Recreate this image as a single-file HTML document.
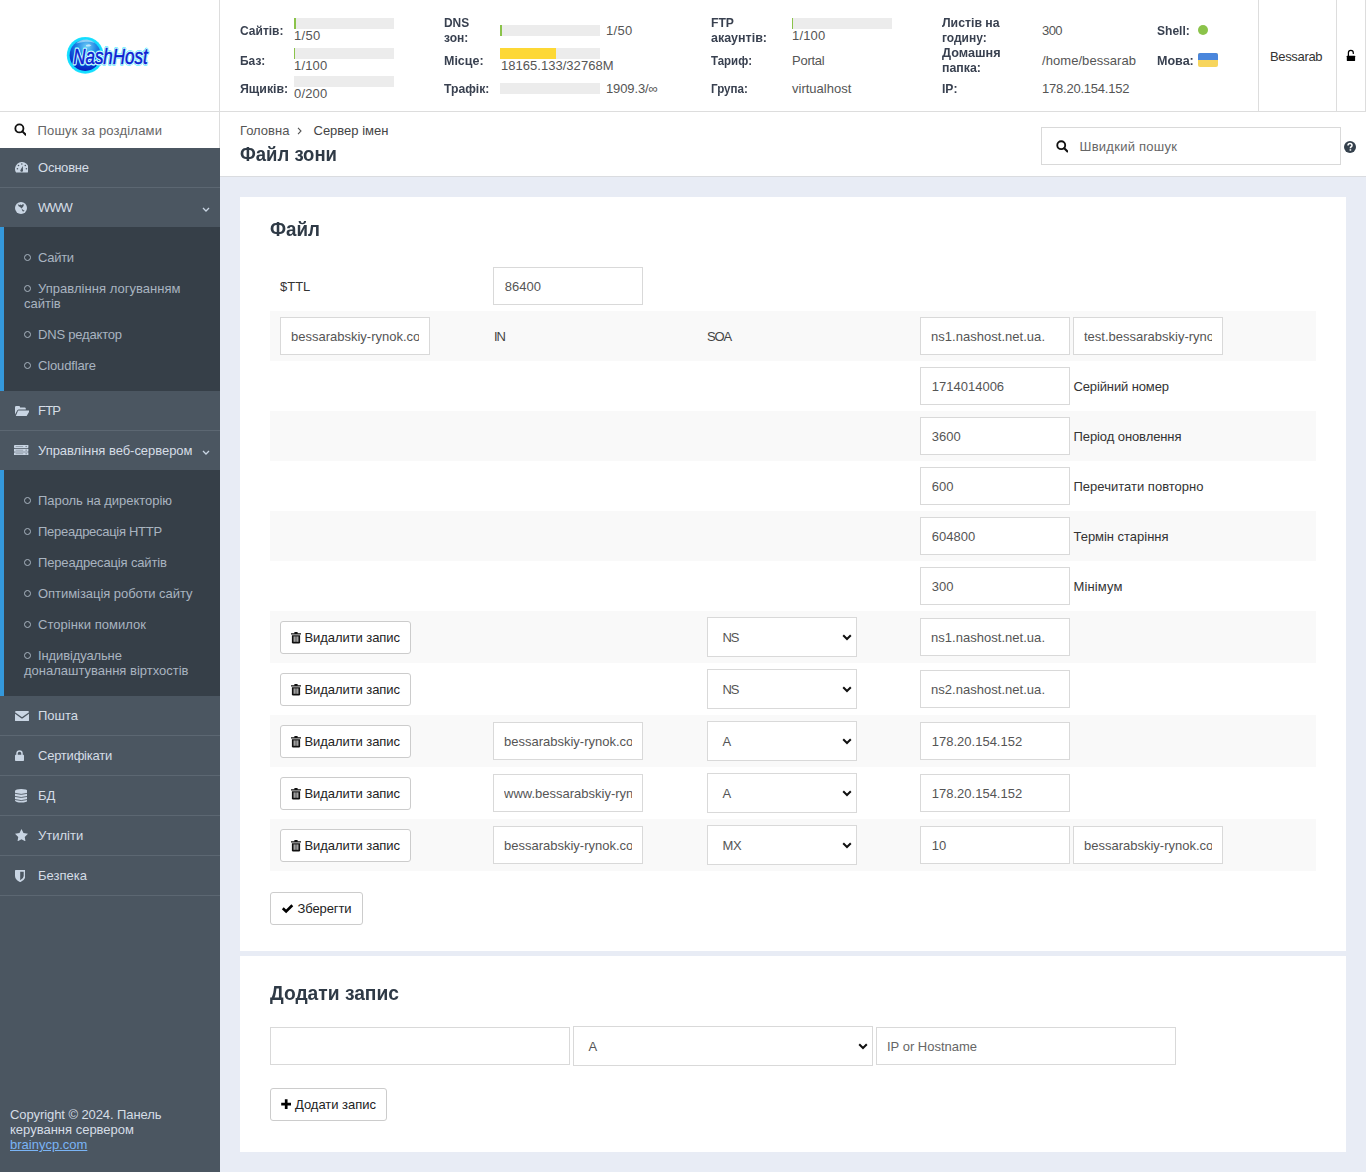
<!DOCTYPE html>
<html lang="uk"><head><meta charset="utf-8"><title>Файл зони</title>
<style>
html,body{margin:0;padding:0}
body{width:1366px;height:1172px;position:relative;overflow:hidden;background:#e8ecf5;font-family:"Liberation Sans",sans-serif;font-size:13px;color:#333}
.r{position:absolute;display:block;box-sizing:border-box}
.t{position:absolute;display:block;white-space:nowrap;line-height:1;margin:0;padding:0}
.in{position:absolute;box-sizing:border-box;background:#fff;border:1px solid #d9d9d9;height:38px}
.btn{position:absolute;box-sizing:border-box;background:#fff;border:1px solid #ccc;border-radius:3px;height:33px}
</style></head><body>
<div class="r" style="left:0px;top:0px;width:1366px;height:111px;background:#fff;"></div>
<div class="r" style="left:0px;top:111px;width:1366px;height:1px;background:#dddddd;"></div>
<div class="r" style="left:0px;top:112px;width:219px;height:36px;background:#fff;"></div>
<div class="r" style="left:220px;top:112px;width:1146px;height:64px;background:#fff;"></div>
<div class="r" style="left:220px;top:176px;width:1146px;height:1px;background:#dadce0;"></div>
<div class="r" style="left:219px;top:0px;width:1px;height:148px;background:#dddddd;"></div>
<div class="r" style="left:1258px;top:0px;width:1px;height:111px;background:#dddddd;"></div>
<div class="r" style="left:1336px;top:0px;width:1px;height:111px;background:#dddddd;"></div>
<div class="r" style="left:1365px;top:0px;width:1px;height:111px;background:#dddddd;"></div>
<div class="r" style="left:0px;top:148px;width:220px;height:1024px;background:#4b5661;"></div>
<div class="r" style="left:240px;top:197px;width:1106px;height:754px;background:#fff;"></div>
<div class="r" style="left:240px;top:956px;width:1106px;height:196px;background:#fff;"></div>
<svg class="r" style="left:55px;top:25px" width="110" height="60" viewBox="55 25 110 60">
<defs>
<radialGradient id="gl" cx="0.55" cy="0.22" r="0.85"><stop offset="0" stop-color="#6fcdf6"/><stop offset="0.35" stop-color="#2389e6"/><stop offset="0.7" stop-color="#0b3fd2"/><stop offset="1" stop-color="#0514b4"/></radialGradient>
<filter id="glow" x="-20%" y="-40%" width="140%" height="180%"><feGaussianBlur stdDeviation="0.9"/></filter>
<filter id="glow2" x="-20%" y="-20%" width="140%" height="140%"><feGaussianBlur stdDeviation="0.6"/></filter>
</defs>
<circle cx="85.2" cy="55.3" r="18.4" fill="#22e4ff" filter="url(#glow2)"/>
<circle cx="85.2" cy="55.3" r="17.6" fill="#14dcff"/>
<circle cx="85.2" cy="55.3" r="15.6" fill="url(#gl)"/>
<path d="M76 43.5 q5 -4.5 11 -4 q5 0.5 8 3.5 q-5 -1.6 -9.5 -1.2 q-5 0.4 -9.5 1.7z" fill="#d8f6ff" opacity="0.55"/>
<path d="M86 45 l3 -0.8 l2.5 1 l-2 1.2 l-3.2 0.2z" fill="#e8fbff" opacity="0.7"/>
<g font-family="Liberation Sans, sans-serif" font-style="italic" font-size="22.5">
<text x="73.2" y="63.7" textLength="74.5" lengthAdjust="spacingAndGlyphs" fill="none" stroke="#3fe9ff" stroke-width="3.4" stroke-linejoin="round" filter="url(#glow2)">NashHost</text>
<text x="73.2" y="63.7" textLength="74.5" lengthAdjust="spacingAndGlyphs" fill="none" stroke="#d4fbff" stroke-width="2.7" stroke-linejoin="round">NashHost</text>
<text x="73.2" y="63.7" textLength="74.5" lengthAdjust="spacingAndGlyphs" fill="#0a22d2" stroke="#0a22d2" stroke-width="0.55">NashHost</text>
</g>
</svg>
<span id="t0" class="t " style="left:240px;top:24px;font-size:13px;color:#394150;font-weight:bold;transform:scaleX(0.9240);transform-origin:0 0;">Сайтів:</span>
<div class="r" style="left:294px;top:18px;width:100px;height:11px;background:#ececec;"></div>
<div class="r" style="left:294px;top:18px;width:2px;height:11px;background:#8bc34a;"></div>
<span id="t1" class="t " style="left:294px;top:29px;font-size:13px;color:#555555;letter-spacing:0.296px;">1/50</span>
<span id="t2" class="t " style="left:240px;top:54px;font-size:13px;color:#394150;font-weight:bold;transform:scaleX(0.9190);transform-origin:0 0;">Баз:</span>
<div class="r" style="left:294px;top:48px;width:100px;height:11px;background:#ececec;"></div>
<div class="r" style="left:294px;top:48px;width:1px;height:11px;background:#8bc34a;"></div>
<span id="t3" class="t " style="left:294px;top:59px;font-size:13px;color:#555555;letter-spacing:0.163px;">1/100</span>
<span id="t4" class="t " style="left:240px;top:82px;font-size:13px;color:#394150;font-weight:bold;transform:scaleX(0.9498);transform-origin:0 0;">Ящиків:</span>
<div class="r" style="left:294px;top:76px;width:100px;height:11px;background:#ececec;"></div>
<span id="t5" class="t " style="left:294px;top:87px;font-size:13px;color:#555555;letter-spacing:0.163px;">0/200</span>
<span id="t6" class="t " style="left:444px;top:16px;font-size:13px;color:#394150;font-weight:bold;transform:scaleX(0.9179);transform-origin:0 0;">DNS</span>
<span id="t7" class="t " style="left:444px;top:31px;font-size:13px;color:#394150;font-weight:bold;transform:scaleX(0.9252);transform-origin:0 0;">зон:</span>
<div class="r" style="left:500px;top:25px;width:100px;height:11px;background:#ececec;"></div>
<div class="r" style="left:500px;top:25px;width:2px;height:11px;background:#8bc34a;"></div>
<span id="t8" class="t " style="left:606px;top:24px;font-size:13px;color:#555555;letter-spacing:0.296px;">1/50</span>
<span id="t9" class="t " style="left:444px;top:54px;font-size:13px;color:#394150;font-weight:bold;transform:scaleX(0.9604);transform-origin:0 0;">Місце:</span>
<div class="r" style="left:500px;top:48px;width:100px;height:11px;background:#ececec;"></div>
<div class="r" style="left:500px;top:48px;width:56px;height:11px;background:#fdd835;"></div>
<span id="t10" class="t " style="left:501px;top:59px;font-size:13px;color:#555555;letter-spacing:0.030px;">18165.133/32768M</span>
<span id="t11" class="t " style="left:444px;top:82px;font-size:13px;color:#394150;font-weight:bold;transform:scaleX(0.9370);transform-origin:0 0;">Трафік:</span>
<div class="r" style="left:500px;top:83px;width:100px;height:11px;background:#ececec;"></div>
<span id="t12" class="t " style="left:606px;top:82px;font-size:13px;color:#555555;letter-spacing:-0.122px;">1909.3/∞</span>
<span id="t13" class="t " style="left:711px;top:16px;font-size:13px;color:#394150;font-weight:bold;transform:scaleX(0.9323);transform-origin:0 0;">FTP</span>
<span id="t14" class="t " style="left:711px;top:31px;font-size:13px;color:#394150;font-weight:bold;transform:scaleX(0.9596);transform-origin:0 0;">акаунтів:</span>
<div class="r" style="left:792px;top:18px;width:100px;height:11px;background:#ececec;"></div>
<div class="r" style="left:792px;top:18px;width:1px;height:11px;background:#8bc34a;"></div>
<span id="t15" class="t " style="left:792px;top:29px;font-size:13px;color:#555555;letter-spacing:0.163px;">1/100</span>
<span id="t16" class="t " style="left:711px;top:54px;font-size:13px;color:#394150;font-weight:bold;transform:scaleX(0.8820);transform-origin:0 0;">Тариф:</span>
<span id="t17" class="t " style="left:792px;top:54px;font-size:13px;color:#555555;letter-spacing:-0.254px;">Portal</span>
<span id="t18" class="t " style="left:711px;top:82px;font-size:13px;color:#394150;font-weight:bold;transform:scaleX(0.8935);transform-origin:0 0;">Група:</span>
<span id="t19" class="t " style="left:792px;top:82px;font-size:13px;color:#555555;">virtualhost</span>
<span id="t20" class="t " style="left:942px;top:16px;font-size:13px;color:#394150;font-weight:bold;transform:scaleX(0.9440);transform-origin:0 0;">Листів на</span>
<span id="t21" class="t " style="left:942px;top:31px;font-size:13px;color:#394150;font-weight:bold;transform:scaleX(0.9216);transform-origin:0 0;">годину:</span>
<span id="t22" class="t " style="left:1042px;top:24px;font-size:13px;color:#555555;letter-spacing:-0.552px;">300</span>
<span id="t23" class="t " style="left:942px;top:46px;font-size:13px;color:#394150;font-weight:bold;transform:scaleX(0.9744);transform-origin:0 0;">Домашня</span>
<span id="t24" class="t " style="left:942px;top:61px;font-size:13px;color:#394150;font-weight:bold;transform:scaleX(0.9488);transform-origin:0 0;">папка:</span>
<span id="t25" class="t " style="left:1042px;top:54px;font-size:13px;color:#555555;letter-spacing:0.059px;">/home/bessarab</span>
<span id="t26" class="t " style="left:942px;top:82px;font-size:13px;color:#394150;font-weight:bold;transform:scaleX(0.9323);transform-origin:0 0;">IP:</span>
<span id="t27" class="t " style="left:1042px;top:82px;font-size:13px;color:#555555;letter-spacing:-0.229px;">178.20.154.152</span>
<span id="t28" class="t " style="left:1157px;top:24px;font-size:13px;color:#394150;font-weight:bold;transform:scaleX(0.9264);transform-origin:0 0;">Shell:</span>
<div class="r" style="left:1198px;top:25px;width:10px;height:10px;background:#8bc34a;border-radius:50%;"></div>
<span id="t29" class="t " style="left:1157px;top:54px;font-size:13px;color:#394150;font-weight:bold;transform:scaleX(0.9645);transform-origin:0 0;">Мова:</span>
<div class="r" style="left:1198px;top:53px;width:20px;height:14px;background:#f7d55d;border-radius:2px;overflow:hidden;"></div>
<div class="r" style="left:1198px;top:53px;width:20px;height:7px;background:#4a86dc;border-radius:2px 2px 0 0;"></div>
<span id="t30" class="t " style="left:1270px;top:50px;font-size:13px;color:#333;letter-spacing:-0.346px;">Bessarab</span>
<svg class="r" style="left:1346px;top:49px;" width="10" height="13" viewBox="0 0 10 13"><rect x="0.8" y="6.8" width="8.3" height="5.2" rx="0.4" fill="#000"/><path d="M2.4 7 V3.85 a2.45 2.45 0 0 1 4.9 0 V4.4" fill="none" stroke="#000" stroke-width="1.25" stroke-linecap="round"/></svg>
<svg class="r" style="left:13.9px;top:123px;" width="12.5" height="12.5" viewBox="0 0 13 13"><circle cx="5.6" cy="5.6" r="4.2" fill="none" stroke="#111" stroke-width="1.9"/><path d="M8.7 8.7 L12.2 12.2" stroke="#111" stroke-width="2.1" stroke-linecap="round"/></svg>
<span id="t31" class="t " style="left:37.5px;top:124px;font-size:13px;color:#666;letter-spacing:0.200px;">Пошук за розділами</span>
<div class="r" style="left:0px;top:187px;width:220px;height:1px;background:#5c6772;"></div>
<svg class="r" style="left:14.5px;top:162.4px" width="13.8" height="10.7" viewBox="0 0 13.8 10.7"><path d="M1.08 10.6 A6.9 6.9 0 1 1 12.72 10.6 Z" fill="#c9d5e3"/><circle cx="6.8" cy="2.0" r="0.75" fill="#4b5661"/><circle cx="3.5" cy="3.5" r="0.8" fill="#4b5661"/><circle cx="10.3" cy="3.5" r="0.8" fill="#4b5661"/><circle cx="2.4" cy="6.8" r="0.8" fill="#4b5661"/><circle cx="11.4" cy="6.8" r="0.8" fill="#4b5661"/><path d="M7.75 3.9 L8.0 8.3 A1.35 1.35 0 1 1 5.6 7.7z" fill="#4b5661"/></svg>
<span id="t32" class="t " style="left:38px;top:161px;font-size:13px;color:#d5dde6;letter-spacing:-0.224px;">Основне</span>
<svg class="r" style="left:14.6px;top:201.5px" width="12" height="12" viewBox="0 0 12 12"><circle cx="6" cy="6" r="6" fill="#c9d5e3"/><path d="M2.8 2.2 L4.6 2.9 L5.6 2.4 L6.6 3.2 L7.6 2.2 L9 2.6 L8.4 4.2 L7.4 5.6 L6.6 6.6 L5.8 5.8 L5 5 L3.6 4.2z" fill="#4b5661"/><path d="M6.6 6.4 L7.6 7.6 L8.6 8.2 L9.6 8.4 L8.6 9.6 L7.6 9.2 L7 8z" fill="#4b5661"/></svg>
<span id="t33" class="t " style="left:38px;top:201px;font-size:13px;color:#d5dde6;letter-spacing:-1.006px;">WWW</span>
<svg class="r" style="left:201.5px;top:207px;" width="8" height="5" viewBox="0 0 8 5"><path d="M1 1 L4 4 L7 1" fill="none" stroke="#c9d5e3" stroke-width="1.3"/></svg>
<div class="r" style="left:0px;top:227px;width:220px;height:164px;background:#363f48;"></div>
<div class="r" style="left:0px;top:227px;width:4px;height:164px;background:#3498db;"></div>
<div class="r" style="left:24px;top:253.5px;width:7.4px;height:7.4px;background:transparent;border:1.5px solid #a9b4c0;border-radius:50%;"></div>
<span id="t34" class="t " style="left:38px;top:251px;font-size:13px;color:#a9b4c0;letter-spacing:-0.287px;">Сайти</span>
<div class="r" style="left:24px;top:284.5px;width:7.4px;height:7.4px;background:transparent;border:1.5px solid #a9b4c0;border-radius:50%;"></div>
<span id="t35" class="t " style="left:38px;top:282px;font-size:13px;color:#a9b4c0;letter-spacing:0.035px;">Управління логуванням</span>
<span id="t36" class="t " style="left:24px;top:297px;font-size:13px;color:#a9b4c0;">сайтів</span>
<div class="r" style="left:24px;top:330.5px;width:7.4px;height:7.4px;background:transparent;border:1.5px solid #a9b4c0;border-radius:50%;"></div>
<span id="t37" class="t " style="left:38px;top:328px;font-size:13px;color:#a9b4c0;letter-spacing:-0.187px;">DNS редактор</span>
<div class="r" style="left:24px;top:361.5px;width:7.4px;height:7.4px;background:transparent;border:1.5px solid #a9b4c0;border-radius:50%;"></div>
<span id="t38" class="t " style="left:38px;top:359px;font-size:13px;color:#a9b4c0;letter-spacing:-0.141px;">Cloudflare</span>
<div class="r" style="left:0px;top:430px;width:220px;height:1px;background:#5c6772;"></div>
<svg class="r" style="left:14.5px;top:405.5px" width="14.5" height="10.5" viewBox="0 0 14.5 10.5"><path d="M0 1.2 Q0 0 1.2 0 H4 Q5 0 5 1 V1.4 H9.6 Q10.8 1.4 10.8 2.6 V3.6 H3.8 Q2.8 3.6 2.2 4.6 L0 8.6z" fill="#c9d5e3"/><path d="M3.4 4.6 H14 Q14.8 4.6 14.3 5.4 L11.8 9.8 Q11.4 10.5 10.6 10.5 H0.6 L2.8 5.2 Q3 4.6 3.4 4.6z" fill="#c9d5e3"/></svg>
<span id="t39" class="t " style="left:38px;top:404px;font-size:13px;color:#d5dde6;letter-spacing:-0.781px;">FTP</span>
<svg class="r" style="left:14.4px;top:444.8px" width="14.4" height="10.4" viewBox="0 0 14.4 10.4"><rect x="0" y="0" width="14.4" height="3" rx="0.45" fill="#c9d5e3"/><rect x="1.6" y="1.15" width="7.6" height="0.7" fill="#4b5661" opacity="0.55"/><rect x="11.6" y="0.95" width="1.1" height="1.1" fill="#4b5661" opacity="0.8"/><rect x="0" y="3.65" width="14.4" height="3" rx="0.45" fill="#c9d5e3"/><rect x="1.6" y="4.8" width="7.6" height="0.7" fill="#4b5661" opacity="0.55"/><rect x="11.6" y="4.6" width="1.1" height="1.1" fill="#4b5661" opacity="0.8"/><rect x="0" y="7.3" width="14.4" height="3" rx="0.45" fill="#c9d5e3"/><rect x="1.6" y="8.45" width="7.6" height="0.7" fill="#4b5661" opacity="0.55"/><rect x="11.6" y="8.25" width="1.1" height="1.1" fill="#4b5661" opacity="0.8"/></svg>
<span id="t40" class="t " style="left:38px;top:444px;font-size:13px;color:#d5dde6;letter-spacing:-0.033px;">Управління веб-сервером</span>
<svg class="r" style="left:201.5px;top:450px;" width="8" height="5" viewBox="0 0 8 5"><path d="M1 1 L4 4 L7 1" fill="none" stroke="#c9d5e3" stroke-width="1.3"/></svg>
<div class="r" style="left:0px;top:470px;width:220px;height:226px;background:#363f48;"></div>
<div class="r" style="left:0px;top:470px;width:4px;height:226px;background:#3498db;"></div>
<div class="r" style="left:24px;top:496.5px;width:7.4px;height:7.4px;background:transparent;border:1.5px solid #a9b4c0;border-radius:50%;"></div>
<span id="t41" class="t " style="left:38px;top:494px;font-size:13px;color:#a9b4c0;letter-spacing:-0.042px;">Пароль на директорію</span>
<div class="r" style="left:24px;top:527.5px;width:7.4px;height:7.4px;background:transparent;border:1.5px solid #a9b4c0;border-radius:50%;"></div>
<span id="t42" class="t " style="left:38px;top:525px;font-size:13px;color:#a9b4c0;letter-spacing:-0.286px;">Переадресація HTTP</span>
<div class="r" style="left:24px;top:558.5px;width:7.4px;height:7.4px;background:transparent;border:1.5px solid #a9b4c0;border-radius:50%;"></div>
<span id="t43" class="t " style="left:38px;top:556px;font-size:13px;color:#a9b4c0;letter-spacing:-0.151px;">Переадресація сайтів</span>
<div class="r" style="left:24px;top:589.5px;width:7.4px;height:7.4px;background:transparent;border:1.5px solid #a9b4c0;border-radius:50%;"></div>
<span id="t44" class="t " style="left:38px;top:587px;font-size:13px;color:#a9b4c0;letter-spacing:-0.050px;">Оптимізація роботи сайту</span>
<div class="r" style="left:24px;top:620.5px;width:7.4px;height:7.4px;background:transparent;border:1.5px solid #a9b4c0;border-radius:50%;"></div>
<span id="t45" class="t " style="left:38px;top:618px;font-size:13px;color:#a9b4c0;letter-spacing:0.040px;">Сторінки помилок</span>
<div class="r" style="left:24px;top:651.5px;width:7.4px;height:7.4px;background:transparent;border:1.5px solid #a9b4c0;border-radius:50%;"></div>
<span id="t46" class="t " style="left:38px;top:649px;font-size:13px;color:#a9b4c0;letter-spacing:-0.123px;">Індивідуальне</span>
<span id="t47" class="t " style="left:24px;top:664px;font-size:13px;color:#a9b4c0;letter-spacing:-0.005px;">доналаштування віртхостів</span>
<div class="r" style="left:0px;top:735px;width:220px;height:1px;background:#5c6772;"></div>
<svg class="r" style="left:14.5px;top:711px" width="14" height="10.4" viewBox="0 0 14 10.4"><path d="M0 1.2 Q0 0 1.2 0 H12.8 Q14 0 14 1.2 L7.6 5.8 Q7 6.2 6.4 5.8z" fill="#c9d5e3"/><path d="M0 2.8 L6.2 7.2 Q7 7.7 7.8 7.2 L14 2.8 V9.2 Q14 10.4 12.8 10.4 H1.2 Q0 10.4 0 9.2z" fill="#c9d5e3"/></svg>
<span id="t48" class="t " style="left:38px;top:709px;font-size:13px;color:#d5dde6;">Пошта</span>
<div class="r" style="left:0px;top:775px;width:220px;height:1px;background:#5c6772;"></div>
<svg class="r" style="left:14.7px;top:749.5px" width="9" height="11" viewBox="0 0 9 11"><rect x="0" y="4.8" width="9" height="6.2" rx="0.8" fill="#c9d5e3"/><path d="M2 5 V3.4 a2.5 2.5 0 0 1 5 0 V5" fill="none" stroke="#c9d5e3" stroke-width="1.5"/></svg>
<span id="t49" class="t " style="left:38px;top:749px;font-size:13px;color:#d5dde6;letter-spacing:-0.230px;">Сертифікати</span>
<div class="r" style="left:0px;top:815px;width:220px;height:1px;background:#5c6772;"></div>
<svg class="r" style="left:14.5px;top:789px" width="12.4" height="13.6" viewBox="0 0 12.4 13.6"><path d="M0 2.1 V11.4 A6.2 2.1 0 0 0 12.4 11.4 V2.1z" fill="#c9d5e3"/><ellipse cx="6.2" cy="2.1" rx="6.2" ry="2.1" fill="#c9d5e3"/><path d="M0 4.3 Q6.2 6.5 12.4 4.3" fill="none" stroke="#4b5661" stroke-width="0.85"/><path d="M0 7.4 Q6.2 9.6 12.4 7.4" fill="none" stroke="#4b5661" stroke-width="0.85"/><path d="M0 10.5 Q6.2 12.7 12.4 10.5" fill="none" stroke="#4b5661" stroke-width="0.85"/></svg>
<span id="t50" class="t " style="left:38px;top:789px;font-size:13px;color:#d5dde6;">БД</span>
<div class="r" style="left:0px;top:855px;width:220px;height:1px;background:#5c6772;"></div>
<svg class="r" style="left:14.9px;top:829.1px" width="13" height="12.4" viewBox="0 0 13 12.4"><path d="M6.5 0 L8.5 4.1 L13 4.75 L9.75 7.9 L10.5 12.4 L6.5 10.25 L2.5 12.4 L3.25 7.9 L0 4.75 L4.5 4.1z" fill="#c9d5e3"/></svg>
<span id="t51" class="t " style="left:38px;top:829px;font-size:13px;color:#d5dde6;">Утиліти</span>
<div class="r" style="left:0px;top:895px;width:220px;height:1px;background:#5c6772;"></div>
<svg class="r" style="left:14.5px;top:869.6px" width="10.4" height="12.2" viewBox="0 0 10.4 12.2"><path d="M0 0.6 Q0 0 0.6 0 H9.8 Q10.4 0 10.4 0.6 V6 Q10.4 9.8 5.2 12.2 Q0 9.8 0 6z" fill="#c9d5e3"/><path d="M5.2 1.7 H8.7 V6 Q8.7 8.4 5.2 10.3z" fill="#4b5661"/></svg>
<span id="t52" class="t " style="left:38px;top:869px;font-size:13px;color:#d5dde6;">Безпека</span>
<span id="t53" class="t " style="left:10px;top:1108px;font-size:13px;color:#d5dde6;letter-spacing:-0.087px;">Copyright © 2024. Панель</span>
<span id="t54" class="t " style="left:10px;top:1123px;font-size:13px;color:#d5dde6;">керування сервером</span>
<span id="t55" class="t " style="left:10px;top:1138px;font-size:13px;color:#7ab4f5;text-decoration:underline;">brainycp.com</span>
<span id="t56" class="t " style="left:240px;top:124px;font-size:13px;color:#555;">Головна</span>
<svg class="r" style="left:297px;top:126.5px;" width="5" height="8" viewBox="0 0 5 8"><path d="M1 0.8 L4 4 L1 7.2" fill="none" stroke="#555" stroke-width="1.1"/></svg>
<span id="t57" class="t " style="left:313.5px;top:124px;font-size:13px;color:#444;">Сервер імен</span>
<span id="t58" class="t " style="left:240px;top:144px;font-size:20px;color:#2f3a46;font-weight:bold;transform:scaleX(0.9256);transform-origin:0 0;">Файл зони</span>
<div class="r" style="left:1041px;top:127px;width:300px;height:38px;background:#fff;border:1px solid #d9d9d9;"></div>
<svg class="r" style="left:1055.8px;top:140px;" width="12.6" height="12.6" viewBox="0 0 13 13"><circle cx="5.4" cy="5.4" r="4.1" fill="none" stroke="#111" stroke-width="1.9"/><path d="M8.5 8.5 L11.8 11.8" stroke="#111" stroke-width="2.1" stroke-linecap="round"/></svg>
<span id="t59" class="t " style="left:1079.5px;top:139.5px;font-size:13px;color:#666;letter-spacing:0.259px;">Швидкий пошук</span>
<svg class="r" style="left:1344px;top:141px;" width="12" height="12" viewBox="0 0 12 12"><circle cx="6" cy="6" r="6" fill="#34404c"/><path d="M4 4.6 Q4 2.6 6 2.6 Q8 2.6 8 4.4 Q8 5.4 6.9 6 Q6.4 6.3 6.4 7.2" fill="none" stroke="#fff" stroke-width="1.5"/><rect x="5.6" y="8.2" width="1.6" height="1.5" fill="#fff"/></svg>
<span id="t60" class="t " style="left:270px;top:219px;font-size:20px;color:#2f3a46;font-weight:bold;transform:scaleX(0.9398);transform-origin:0 0;">Файл</span>
<div class="r" style="left:270px;top:311px;width:1046px;height:50px;background:#f9f9f9;"></div>
<div class="r" style="left:270px;top:411px;width:1046px;height:50px;background:#f9f9f9;"></div>
<div class="r" style="left:270px;top:511px;width:1046px;height:50px;background:#f9f9f9;"></div>
<div class="r" style="left:270px;top:611px;width:1046px;height:52px;background:#f9f9f9;"></div>
<div class="r" style="left:270px;top:715px;width:1046px;height:52px;background:#f9f9f9;"></div>
<div class="r" style="left:270px;top:819px;width:1046px;height:52px;background:#f9f9f9;"></div>
<span id="t61" class="t " style="left:280px;top:279.5px;font-size:13px;color:#333;">$TTL</span>
<div class="in" style="left:493px;top:267px;width:150px"></div>
<span id="t62" class="t " style="left:504.8px;top:279.5px;font-size:13px;color:#555;">86400</span>
<div class="in" style="left:280px;top:317px;width:150px;overflow:hidden">
<div class="r" style="left:10px;top:0;width:128px;height:36px;overflow:hidden">
<span id="t63" class="t " style="left:0px;top:11.5px;font-size:13px;color:#555;">bessarabskiy-rynok.com.</span>
</div></div>
<span id="t64" class="t " style="left:494px;top:329.5px;font-size:13px;color:#444;letter-spacing:-1.200px;">IN</span>
<span id="t65" class="t " style="left:707px;top:329.5px;font-size:13px;color:#444;letter-spacing:-1.200px;">SOA</span>
<div class="in" style="left:920px;top:317px;width:150px"></div>
<span id="t66" class="t " style="left:931px;top:329.5px;font-size:13px;color:#555;letter-spacing:0.029px;">ns1.nashost.net.ua.</span>
<div class="in" style="left:1073px;top:317px;width:150px;overflow:hidden">
<div class="r" style="left:10px;top:0;width:128px;height:36px;overflow:hidden">
<span id="t67" class="t " style="left:0px;top:11.5px;font-size:13px;color:#555;">test.bessarabskiy-rynok.com.</span>
</div></div>
<div class="in" style="left:920px;top:367px;width:150px"></div>
<span id="t68" class="t " style="left:931.8px;top:379.5px;font-size:13px;color:#555;">1714014006</span>
<span id="t69" class="t " style="left:1073.5px;top:379.5px;font-size:13px;color:#333;letter-spacing:-0.125px;">Серійний номер</span>
<div class="in" style="left:920px;top:417px;width:150px"></div>
<span id="t70" class="t " style="left:931.8px;top:429.5px;font-size:13px;color:#555;">3600</span>
<span id="t71" class="t " style="left:1073.5px;top:429.5px;font-size:13px;color:#333;letter-spacing:-0.086px;">Період оновлення</span>
<div class="in" style="left:920px;top:467px;width:150px"></div>
<span id="t72" class="t " style="left:931.8px;top:479.5px;font-size:13px;color:#555;">600</span>
<span id="t73" class="t " style="left:1073.5px;top:479.5px;font-size:13px;color:#333;letter-spacing:0.011px;">Перечитати повторно</span>
<div class="in" style="left:920px;top:517px;width:150px"></div>
<span id="t74" class="t " style="left:931.8px;top:529.5px;font-size:13px;color:#555;">604800</span>
<span id="t75" class="t " style="left:1073.5px;top:529.5px;font-size:13px;color:#333;letter-spacing:-0.025px;">Термін старіння</span>
<div class="in" style="left:920px;top:567px;width:150px"></div>
<span id="t76" class="t " style="left:931.8px;top:579.5px;font-size:13px;color:#555;">300</span>
<span id="t77" class="t " style="left:1073.5px;top:579.5px;font-size:13px;color:#333;letter-spacing:0.138px;">Мінімум</span>
<div class="btn" style="left:280px;top:621px;width:131px"></div>
<svg class="r" style="left:291px;top:632px;" width="10" height="11.5" viewBox="0 0 10 11.5"><path d="M3.4 0 H6.6 V1.3 H10 V2.6 H0 V1.3 H3.4z" fill="#111"/><path d="M0.9 3.2 H9.1 V10.3 Q9.1 11.5 7.9 11.5 H2.1 Q0.9 11.5 0.9 10.3z" fill="#111"/><rect x="2.7" y="4.4" width="0.9" height="5.4" fill="#fff"/><rect x="4.55" y="4.4" width="0.9" height="5.4" fill="#fff"/><rect x="6.4" y="4.4" width="0.9" height="5.4" fill="#fff"/></svg>
<span id="t78" class="t " style="left:304.5px;top:630.5px;font-size:13px;color:#222;letter-spacing:-0.071px;">Видалити запис</span>
<div class="in" style="left:707px;top:617px;width:150px;height:40px"></div>
<span id="t79" class="t " style="left:722.5px;top:630.5px;font-size:13px;color:#555;letter-spacing:-1.200px;">NS</span>
<svg class="r" style="left:842px;top:633.5px;" width="10" height="7" viewBox="0 0 10 7"><path d="M1.2 1.2 L5 5 L8.8 1.2" fill="none" stroke="#111" stroke-width="2"/></svg>
<div class="in" style="left:920px;top:618px;width:150px"></div>
<span id="t80" class="t " style="left:931px;top:630.5px;font-size:13px;color:#555;letter-spacing:0.029px;">ns1.nashost.net.ua.</span>
<div class="btn" style="left:280px;top:673px;width:131px"></div>
<svg class="r" style="left:291px;top:684px;" width="10" height="11.5" viewBox="0 0 10 11.5"><path d="M3.4 0 H6.6 V1.3 H10 V2.6 H0 V1.3 H3.4z" fill="#111"/><path d="M0.9 3.2 H9.1 V10.3 Q9.1 11.5 7.9 11.5 H2.1 Q0.9 11.5 0.9 10.3z" fill="#111"/><rect x="2.7" y="4.4" width="0.9" height="5.4" fill="#fff"/><rect x="4.55" y="4.4" width="0.9" height="5.4" fill="#fff"/><rect x="6.4" y="4.4" width="0.9" height="5.4" fill="#fff"/></svg>
<span id="t81" class="t " style="left:304.5px;top:682.5px;font-size:13px;color:#222;letter-spacing:-0.071px;">Видалити запис</span>
<div class="in" style="left:707px;top:669px;width:150px;height:40px"></div>
<span id="t82" class="t " style="left:722.5px;top:682.5px;font-size:13px;color:#555;letter-spacing:-1.200px;">NS</span>
<svg class="r" style="left:842px;top:685.5px;" width="10" height="7" viewBox="0 0 10 7"><path d="M1.2 1.2 L5 5 L8.8 1.2" fill="none" stroke="#111" stroke-width="2"/></svg>
<div class="in" style="left:920px;top:670px;width:150px"></div>
<span id="t83" class="t " style="left:931px;top:682.5px;font-size:13px;color:#555;letter-spacing:0.029px;">ns2.nashost.net.ua.</span>
<div class="btn" style="left:280px;top:725px;width:131px"></div>
<svg class="r" style="left:291px;top:736px;" width="10" height="11.5" viewBox="0 0 10 11.5"><path d="M3.4 0 H6.6 V1.3 H10 V2.6 H0 V1.3 H3.4z" fill="#111"/><path d="M0.9 3.2 H9.1 V10.3 Q9.1 11.5 7.9 11.5 H2.1 Q0.9 11.5 0.9 10.3z" fill="#111"/><rect x="2.7" y="4.4" width="0.9" height="5.4" fill="#fff"/><rect x="4.55" y="4.4" width="0.9" height="5.4" fill="#fff"/><rect x="6.4" y="4.4" width="0.9" height="5.4" fill="#fff"/></svg>
<span id="t84" class="t " style="left:304.5px;top:734.5px;font-size:13px;color:#222;letter-spacing:-0.071px;">Видалити запис</span>
<div class="in" style="left:493px;top:722px;width:150px;overflow:hidden">
<div class="r" style="left:10px;top:0;width:128px;height:36px;overflow:hidden">
<span id="t85" class="t " style="left:0px;top:11.5px;font-size:13px;color:#555;">bessarabskiy-rynok.com.</span>
</div></div>
<div class="in" style="left:707px;top:721px;width:150px;height:40px"></div>
<span id="t86" class="t " style="left:722.5px;top:734.5px;font-size:13px;color:#555;">A</span>
<svg class="r" style="left:842px;top:737.5px;" width="10" height="7" viewBox="0 0 10 7"><path d="M1.2 1.2 L5 5 L8.8 1.2" fill="none" stroke="#111" stroke-width="2"/></svg>
<div class="in" style="left:920px;top:722px;width:150px"></div>
<span id="t87" class="t " style="left:931.8px;top:734.5px;font-size:13px;color:#555;">178.20.154.152</span>
<div class="btn" style="left:280px;top:777px;width:131px"></div>
<svg class="r" style="left:291px;top:788px;" width="10" height="11.5" viewBox="0 0 10 11.5"><path d="M3.4 0 H6.6 V1.3 H10 V2.6 H0 V1.3 H3.4z" fill="#111"/><path d="M0.9 3.2 H9.1 V10.3 Q9.1 11.5 7.9 11.5 H2.1 Q0.9 11.5 0.9 10.3z" fill="#111"/><rect x="2.7" y="4.4" width="0.9" height="5.4" fill="#fff"/><rect x="4.55" y="4.4" width="0.9" height="5.4" fill="#fff"/><rect x="6.4" y="4.4" width="0.9" height="5.4" fill="#fff"/></svg>
<span id="t88" class="t " style="left:304.5px;top:786.5px;font-size:13px;color:#222;letter-spacing:-0.071px;">Видалити запис</span>
<div class="in" style="left:493px;top:774px;width:150px;overflow:hidden">
<div class="r" style="left:10px;top:0;width:128px;height:36px;overflow:hidden">
<span id="t89" class="t " style="left:0px;top:11.5px;font-size:13px;color:#555;">www.bessarabskiy-rynok.com.</span>
</div></div>
<div class="in" style="left:707px;top:773px;width:150px;height:40px"></div>
<span id="t90" class="t " style="left:722.5px;top:786.5px;font-size:13px;color:#555;">A</span>
<svg class="r" style="left:842px;top:789.5px;" width="10" height="7" viewBox="0 0 10 7"><path d="M1.2 1.2 L5 5 L8.8 1.2" fill="none" stroke="#111" stroke-width="2"/></svg>
<div class="in" style="left:920px;top:774px;width:150px"></div>
<span id="t91" class="t " style="left:931.8px;top:786.5px;font-size:13px;color:#555;">178.20.154.152</span>
<div class="btn" style="left:280px;top:829px;width:131px"></div>
<svg class="r" style="left:291px;top:840px;" width="10" height="11.5" viewBox="0 0 10 11.5"><path d="M3.4 0 H6.6 V1.3 H10 V2.6 H0 V1.3 H3.4z" fill="#111"/><path d="M0.9 3.2 H9.1 V10.3 Q9.1 11.5 7.9 11.5 H2.1 Q0.9 11.5 0.9 10.3z" fill="#111"/><rect x="2.7" y="4.4" width="0.9" height="5.4" fill="#fff"/><rect x="4.55" y="4.4" width="0.9" height="5.4" fill="#fff"/><rect x="6.4" y="4.4" width="0.9" height="5.4" fill="#fff"/></svg>
<span id="t92" class="t " style="left:304.5px;top:838.5px;font-size:13px;color:#222;letter-spacing:-0.071px;">Видалити запис</span>
<div class="in" style="left:493px;top:826px;width:150px;overflow:hidden">
<div class="r" style="left:10px;top:0;width:128px;height:36px;overflow:hidden">
<span id="t93" class="t " style="left:0px;top:11.5px;font-size:13px;color:#555;">bessarabskiy-rynok.com.</span>
</div></div>
<div class="in" style="left:707px;top:825px;width:150px;height:40px"></div>
<span id="t94" class="t " style="left:722.5px;top:838.5px;font-size:13px;color:#555;letter-spacing:-0.400px;">MX</span>
<svg class="r" style="left:842px;top:841.5px;" width="10" height="7" viewBox="0 0 10 7"><path d="M1.2 1.2 L5 5 L8.8 1.2" fill="none" stroke="#111" stroke-width="2"/></svg>
<div class="in" style="left:920px;top:826px;width:150px"></div>
<span id="t95" class="t " style="left:931.8px;top:838.5px;font-size:13px;color:#555;">10</span>
<div class="in" style="left:1073px;top:826px;width:150px;overflow:hidden">
<div class="r" style="left:10px;top:0;width:128px;height:36px;overflow:hidden">
<span id="t96" class="t " style="left:0px;top:11.5px;font-size:13px;color:#555;">bessarabskiy-rynok.com.</span>
</div></div>
<div class="btn" style="left:270px;top:892px;width:93px"></div>
<svg class="r" style="left:281px;top:903px;" width="13" height="11" viewBox="0 0 13 11"><path d="M1.8 5.3 L5.1 8.4 L11.3 2.3" fill="none" stroke="#000" stroke-width="2.7"/></svg>
<span id="t97" class="t " style="left:297.5px;top:901.5px;font-size:13px;color:#222;letter-spacing:-0.116px;">Зберегти</span>
<span id="t98" class="t " style="left:270px;top:983px;font-size:20px;color:#2f3a46;font-weight:bold;transform:scaleX(0.9611);transform-origin:0 0;">Додати запис</span>
<div class="in" style="left:270px;top:1027px;width:300px"></div>
<div class="in" style="left:573px;top:1026px;width:300px;height:40px"></div>
<span id="t99" class="t " style="left:588.5px;top:1039.5px;font-size:13px;color:#555;">A</span>
<svg class="r" style="left:858px;top:1042.5px;" width="10" height="7" viewBox="0 0 10 7"><path d="M1.2 1.2 L5 5 L8.8 1.2" fill="none" stroke="#111" stroke-width="2"/></svg>
<div class="in" style="left:876px;top:1027px;width:300px"></div>
<span id="t100" class="t " style="left:887px;top:1039.5px;font-size:13px;color:#666;">IP or Hostname</span>
<div class="btn" style="left:270px;top:1088px;width:117px"></div>
<svg class="r" style="left:280.8px;top:1098.8px;" width="10.4" height="10.4" viewBox="0 0 10 10"><path d="M5 0.2 V9.8 M0.2 5 H9.8" stroke="#000" stroke-width="2.6"/></svg>
<span id="t101" class="t " style="left:295px;top:1097.5px;font-size:13px;color:#222;letter-spacing:-0.023px;">Додати запис</span>
</body></html>
